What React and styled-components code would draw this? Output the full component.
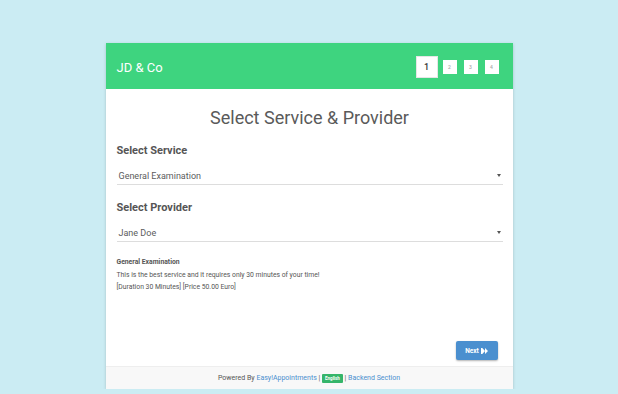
import React from "react";
import styled, { createGlobalStyle } from "styled-components";

const Global = createGlobalStyle`
  body {
    margin: 0;
    background: #cbecf3;
    font-family: Roboto, "Liberation Sans", sans-serif;
  }
`;

export default function App() {
  const steps = [1, 2, 3, 4];
  return (
    <>
      <Global />
      <Page>
        <Card>
          <Header>
            <Company>JD &amp; Co</Company>
            <Steps>
              {steps.map((s) => (
                <Step key={s} active={s === 1}>{s}</Step>
              ))}
            </Steps>
          </Header>
          <Body>
            <Title>Select Service &amp; Provider</Title>
            <Label>Select Service</Label>
            <Select>
              <span>General Examination</span>
              <Caret />
            </Select>
            <Label>Select Provider</Label>
            <Select>
              <span>Jane Doe</span>
              <Caret />
            </Select>
            <Details>
              <strong>General Examination</strong>
              <div>This is the best service and it requires only 30 minutes of your time!</div>
              <div>[Duration 30 Minutes] [Price 50.00 Euro]</div>
            </Details>
            <Actions>
              <NextButton>
                Next
                <svg width="7" height="6" viewBox="0 0 14 12">
                  <path d="M0 0h2.5v12H0zM2.5 0L8 6L2.5 12zM8 0L14 6L8 12z" fill="#fff" />
                </svg>
              </NextButton>
            </Actions>
          </Body>
          <Footer>
            Powered By <A>Easy!Appointments</A> | <Badge>English</Badge> | <A>Backend Section</A>
          </Footer>
        </Card>
      </Page>
    </>
  );
}

const Page = styled.div`
  padding-top: 43px;
  display: flex;
  justify-content: center;
`;

const Card = styled.div`
  width: 407px;
  background: #fff;
  box-shadow: 0 1px 3px rgba(0, 0, 0, 0.18);
`;

const Header = styled.div`
  height: 46px;
  background: #3ed47f;
  display: flex;
  align-items: center;
  justify-content: space-between;
  padding: 0 13px 0 11px;
`;

const Company = styled.div`
  color: #fff;
  font-size: 13px;
  margin-top: 2px;
`;

const Steps = styled.div`
  display: flex;
  align-items: center;
  gap: 6px;
  margin-top: 1px;
`;

const Step = styled.div`
  width: ${(p) => (p.active ? "20px" : "14px")};
  height: ${(p) => (p.active ? "20px" : "14px")};
  margin-right: ${(p) => (p.active ? "0" : "1px")};
  background: #fff;
  color: ${(p) => (p.active ? "#333" : "#aaa")};
  font-size: ${(p) => (p.active ? "9px" : "5px")};
  font-weight: 500;
  display: flex;
  align-items: center;
  justify-content: center;
  box-shadow: ${(p) => (p.active ? "0 0 0 1px #e6e6e6" : "none")};
`;

const Body = styled.div`
  height: 277px;
  padding: 0 10px 0 11px;
  display: flex;
  flex-direction: column;
  color: #555;
`;

const Title = styled.h2`
  margin: 18px 0 15px;
  font-size: 18px;
  font-weight: 400;
  line-height: 22px;
  text-align: center;
  color: #5a5a5a;
`;

const Label = styled.div`
  font-size: 11px;
  font-weight: 700;
  line-height: 14px;
  margin-bottom: 8px;
`;

const Select = styled.div`
  height: 17px;
  border-bottom: 1px solid #ddd;
  display: flex;
  align-items: center;
  justify-content: space-between;
  padding: 1px 2px 0;
  margin-bottom: 16px;
  font-size: 9px;
  color: #5c5c5c;
`;

const Caret = styled.span`
  width: 0;
  height: 0;
  border-left: 2.5px solid transparent;
  border-right: 2.5px solid transparent;
  border-top: 3px solid #555;
`;

const Details = styled.div`
  margin-top: -2px;
  font-size: 6.8px;
  line-height: 12.5px;
  color: #555;

  strong {
    display: block;
    font-weight: 700;
  }
`;

const Actions = styled.div`
  margin-top: auto;
  margin-bottom: 6px;
  display: flex;
  justify-content: flex-end;
  padding-right: 5px;
`;

const NextButton = styled.button`
  width: 42px;
  height: 19px;
  border: none;
  border-radius: 2px;
  background: #4a8fcf;
  color: #fff;
  font-family: Roboto, "Liberation Sans", sans-serif;
  font-size: 6.5px;
  font-weight: 700;
  display: flex;
  align-items: center;
  justify-content: center;
  gap: 2px;
  box-shadow: 0 1px 2px rgba(0, 0, 0, 0.3);
  padding: 0;
`;

const Footer = styled.div`
  height: 23px;
  background: #f8f8f8;
  border-top: 1px solid #eee;
  box-sizing: border-box;
  display: flex;
  align-items: center;
  justify-content: center;
  font-size: 7px;
  color: #555;
  white-space: pre;
`;

const A = styled.span`
  color: #4a8fcf;
`;

const Badge = styled.span`
  background: #35b56a;
  color: #fff;
  font-size: 4.5px;
  font-weight: 700;
  padding: 2px 3px;
  border-radius: 1px;
`;
